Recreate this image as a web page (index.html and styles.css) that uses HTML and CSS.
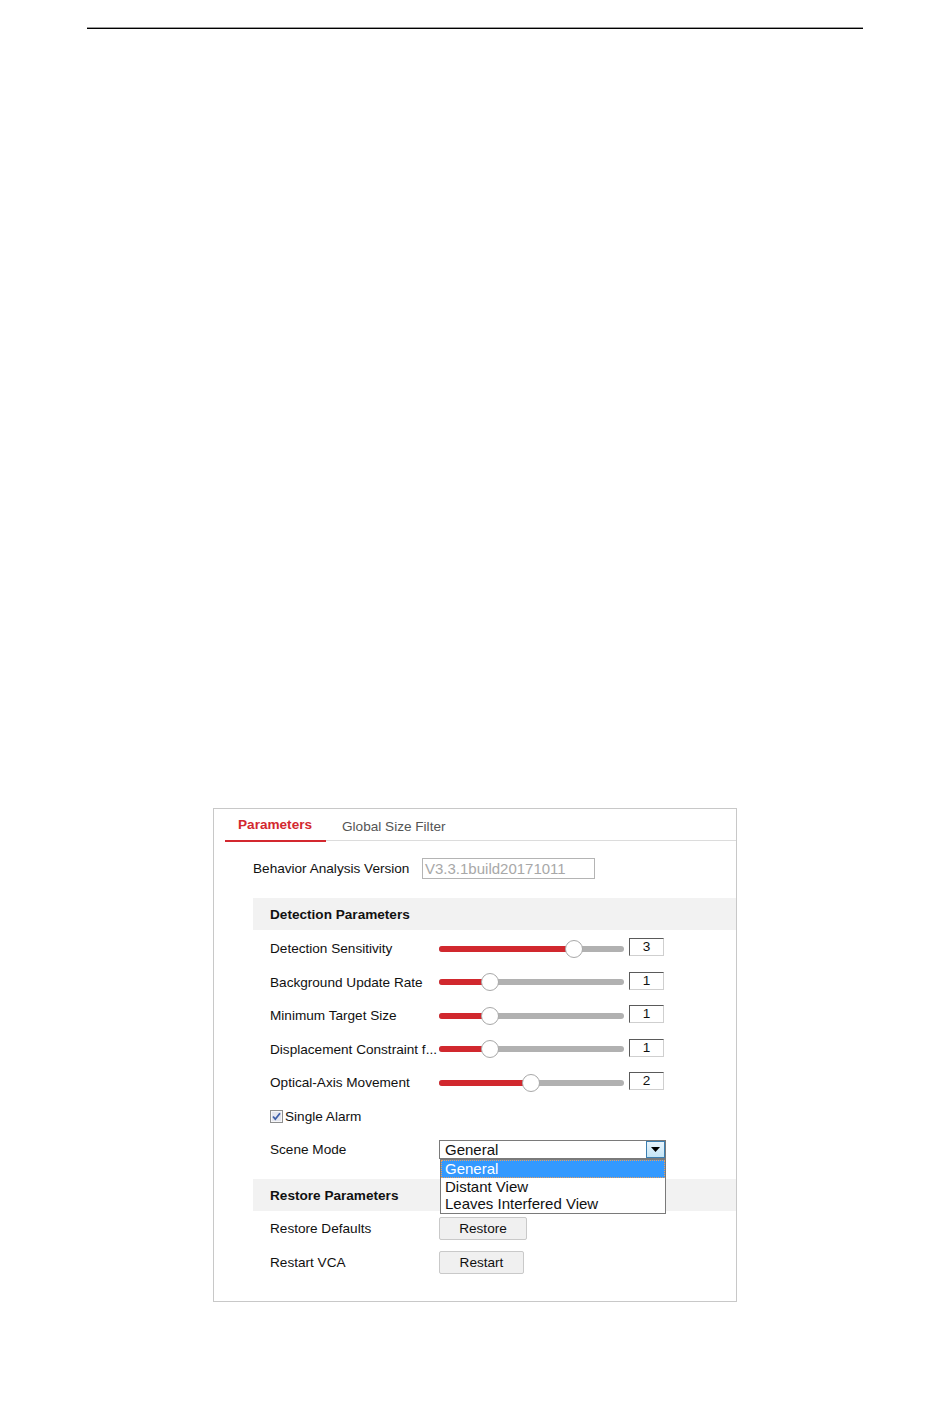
FILE: index.html
```html
<!DOCTYPE html>
<html lang="en">
<head>
    <meta charset="UTF-8">
    <title>Behavior Analysis - Parameters</title>
    <link rel="stylesheet" href="styles.css">
</head>
<body>
    <div class="page-rule"></div>

    <div class="panel">
        <div class="tabs">
            <div class="tab active">Parameters</div>
            <div class="tab">Global Size Filter</div>
        </div>

        <div class="version-row">
            <span class="version-label">Behavior Analysis Version</span>
            <div class="version-box">V3.3.1build20171011</div>
        </div>

        <div class="group-title">Detection Parameters</div>

        <div class="row">
            <span class="row-label">Detection Sensitivity</span>
            <div class="slider">
                <div class="fill" style="width: 73%"></div>
                <div class="thumb" style="left: 73%"></div>
            </div>
            <div class="value-box">3</div>
        </div>
        <div class="row">
            <span class="row-label">Background Update Rate</span>
            <div class="slider">
                <div class="fill" style="width: 27.5%"></div>
                <div class="thumb" style="left: 27.5%"></div>
            </div>
            <div class="value-box">1</div>
        </div>
        <div class="row">
            <span class="row-label">Minimum Target Size</span>
            <div class="slider">
                <div class="fill" style="width: 27.5%"></div>
                <div class="thumb" style="left: 27.5%"></div>
            </div>
            <div class="value-box">1</div>
        </div>
        <div class="row">
            <span class="row-label">Displacement Constraint f...</span>
            <div class="slider">
                <div class="fill" style="width: 27.5%"></div>
                <div class="thumb" style="left: 27.5%"></div>
            </div>
            <div class="value-box">1</div>
        </div>
        <div class="row">
            <span class="row-label">Optical-Axis Movement</span>
            <div class="slider">
                <div class="fill" style="width: 49.7%"></div>
                <div class="thumb" style="left: 49.7%"></div>
            </div>
            <div class="value-box">2</div>
        </div>

        <div class="row">
            <label class="check">
                <svg class="check-box" width="13" height="13" viewBox="0 0 13 13">
                    <rect x="0.5" y="0.5" width="12" height="12" fill="#e4e6ee" stroke="#8e8f8f"/>
                    <rect x="1.5" y="1.5" width="10" height="10" fill="none" stroke="#f6f6f8"/>
                    <path d="M3 6.5 L5.3 9.2 L10 3.2" fill="none" stroke="#3f5fa8" stroke-width="1.8"/>
                </svg>Single Alarm
            </label>
        </div>

        <div class="row">
            <span class="row-label">Scene Mode</span>
            <div class="select">
                <span class="select-value">General</span>
                <span class="select-arrow">
                    <svg width="9" height="5" viewBox="0 0 9 5"><path d="M0 0 H9 L4.5 5 Z" fill="#000"/></svg>
                </span>
                <ul class="select-list">
                    <li class="selected">General</li>
                    <li>Distant View</li>
                    <li>Leaves Interfered View</li>
                </ul>
            </div>
        </div>

        <div class="group-title restore-title">Restore Parameters</div>

        <div class="row">
            <span class="row-label">Restore Defaults</span>
            <button type="button" class="btn btn-restore">Restore</button>
        </div>
        <div class="row">
            <span class="row-label">Restart VCA</span>
            <button type="button" class="btn btn-restart">Restart</button>
        </div>
    </div>
</body>
</html>
```

FILE: styles.css
```css
body {
    margin: 0;
    font-family: "Liberation Sans", Arial, sans-serif;
    font-size: 13.6px;
    color: #111;
    background: #fff;
}

.page-rule {
    margin: 27px 87px 0;
    height: 1px;
    border-top: 1px solid #9a9a9a;
    background: #000;
}

.panel {
    margin: 779px 0 0 213px;
    width: 522px;
    height: 492px;
    border: 1px solid #c8c8c8;
}

.tabs {
    display: flex;
    margin-left: 11px;
    height: 31px;
    border-bottom: 1px solid #dcdcdc;
}

.tab {
    padding-top: 10px;
    color: #555;
    margin-left: 16px;
}

.tab.active {
    width: 101px;
    box-sizing: border-box;
    margin-left: 0;
    padding: 8px 0 0 13px;
    color: #d3282f;
    font-weight: bold;
    border-bottom: 2px solid #d3282f;
    height: 33px;
}

.version-row {
    display: flex;
    align-items: center;
    height: 21px;
    margin: 17px 0 0 39px;
}

.version-label {
    width: 169px;
}

.version-box {
    width: 169px;
    height: 19px;
    border: 1px solid #b4b4b4;
    color: #a8a8a8;
    font-size: 15px;
    line-height: 19px;
    padding-left: 2px;
    box-sizing: content-box;
}

.group-title {
    margin: 19px 0 0 39px;
    height: 32px;
    line-height: 33px;
    padding-left: 17px;
    background: #f2f2f2;
    font-weight: bold;
}

.restore-title {
    margin-top: 12.5px;
}

.row {
    display: flex;
    align-items: center;
    height: 33.5px;
    padding-left: 56px;
}

.group-title + .row {
    margin-top: 2px;
}

.restore-title + .row {
    margin-top: 1px;
}

.row-label {
    width: 169px;
    white-space: nowrap;
    overflow: hidden;
}

.slider {
    position: relative;
    width: 185px;
    height: 6px;
    border-radius: 3px;
    background: #b1b1b1;
}

.slider .fill {
    height: 100%;
    border-radius: 3px 0 0 3px;
    background: #d1282e;
}

.slider .thumb {
    position: absolute;
    top: -6px;
    width: 16px;
    height: 16px;
    margin-left: -9px;
    border: 1px solid #a8a8a8;
    border-radius: 50%;
    background: #fff;
}

.value-box {
    width: 33px;
    height: 16px;
    margin-left: 5px;
    margin-top: -3px;
    border-top: 1px solid #5a5a5a;
    border-left: 1px solid #5a5a5a;
    border-right: 1px solid #cfcfcf;
    border-bottom: 1px solid #cfcfcf;
    text-align: center;
    line-height: 16px;
    font-size: 13.6px;
}

.check {
    display: flex;
    align-items: center;
    margin-top: 1px;
}

.check-box {
    margin-right: 2px;
}

.select {
    position: relative;
    width: 225px;
    height: 17px;
    margin-top: 0;
    border: 1px solid #7a7a7a;
    font-size: 15px;
}

.select-value {
    display: block;
    padding-left: 5px;
    line-height: 18px;
}

.select-arrow {
    position: absolute;
    top: 0;
    right: 0;
    width: 17px;
    height: 15px;
    border: 1px solid #3c7fb1;
    background: linear-gradient(#e8f4fc, #c4e5f6);
    display: flex;
    align-items: center;
    justify-content: center;
}

.select-list {
    position: absolute;
    top: 18px;
    left: 0;
    z-index: 2;
    width: 224px;
    margin: 0;
    padding: 0;
    list-style: none;
    border: 1px solid #7a7a7a;
    background: #fff;
}

.select-list li {
    height: 17.5px;
    line-height: 17px;
    padding-left: 4px;
}

.select-list li.selected {
    background: #3399ff;
    color: #fff;
    outline: 1px dotted #e8a060;
    outline-offset: -1px;
}

.btn {
    height: 23px;
    padding: 0;
    border: 1px solid #c9c9c9;
    border-radius: 2px;
    background: #f0f0f0;
    font-family: "Liberation Sans", Arial, sans-serif;
    font-size: 13.6px;
    color: #111;
}

.btn-restore {
    width: 88px;
}

.btn-restart {
    width: 85px;
}
```
